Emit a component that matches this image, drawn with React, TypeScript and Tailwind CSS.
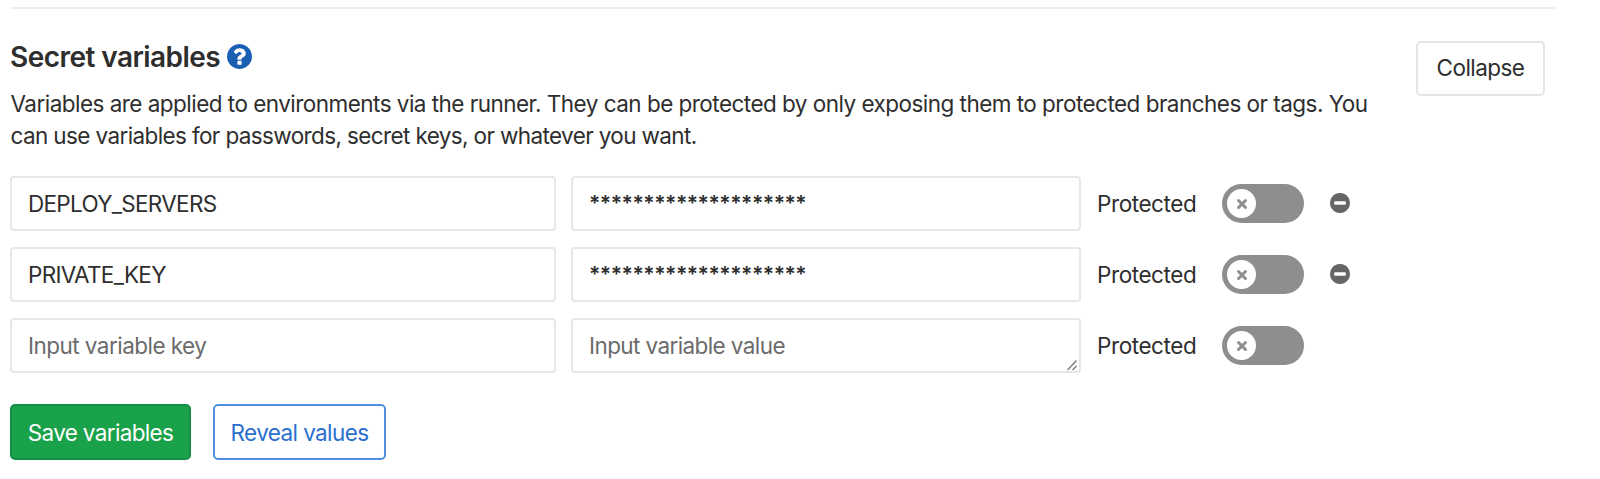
import React from "react";

const CIRCLE =
  "q0 209-103 385.5t-279.5 279.5-385.5 103-385.5-103-279.5-279.5-103-385.5 103-385.5 279.5-279.5 385.5-103 385.5 103 279.5 279.5 103 385.5z";

function HelpIcon() {
  return (
    <svg viewBox="128 128 1536 1536" className="mb-px ml-[7px] size-[25px] fill-[#1b5fb3]" aria-hidden="true">
      <path
        d={
          "M1024 1376v-192q0-14-9-23t-23-9h-192q-14 0-23 9t-9 23v192q0 14 9 23t23 9h192q14 0 23-9t9-23zm256-672q0-88-55.5-163t-138.5-116-170-41q-243 0-371 213-15 24 8 42l132 100q7 6 19 6 16 0 25-12 53-68 86-92 34-24 86-24 48 0 85.5 26t37.5 59q0 38-20 61t-68 45q-63 28-115.5 86.5t-52.5 125.5v36q0 14 9 23t23 9h192q14 0 23-9t9-23q0-19 21.5-49.5t54.5-49.5q32-18 49-28.5t46-35 44.5-48 28-60.5 12.5-81zm384 192" +
          CIRCLE
        }
      />
    </svg>
  );
}

function RemoveIcon() {
  return (
    <svg viewBox="128 128 1536 1536" className="size-5 fill-[#666666]" aria-hidden="true">
      <path
        d={
          "M1344 960v-128q0-26-19-45t-45-19h-768q-26 0-45 19t-19 45v128q0 26 19 45t45 19h768q26 0 45-19t19-45zm320-64" +
          CIRCLE
        }
      />
    </svg>
  );
}

function Toggle() {
  return (
    <button type="button" role="switch" aria-checked="false" className="ml-[26px] flex h-[39px] w-[82px] items-center rounded-full bg-[#8e8e8e] pl-[5px]">
      <span className="flex size-[29px] items-center justify-center rounded-full bg-white">
        <svg viewBox="0 0 12 12" className="size-3" fill="none" stroke="#8e8e8e" strokeWidth="3" strokeLinecap="round">
          <path d="M2.5 2.5 9.5 9.5M9.5 2.5 2.5 9.5" />
        </svg>
      </span>
    </button>
  );
}

const field = "flex h-[55px] items-center rounded-[4px] border-2 border-[#e7e7e7] pl-4 pt-px";

const rows = [
  { name: "DEPLOY_SERVERS", tracking: "tracking-[-0.7px]" },
  { name: "PRIVATE_KEY", tracking: "tracking-[-0.7px]" },
  { name: "", tracking: "" },
];

export default function App() {
  return (
    <main className="h-[479px] w-[1600px] overflow-hidden bg-white pl-[10px] pt-[7px] font-['Inter','Liberation_Sans',sans-serif] text-[22.5px] leading-[32px] text-[#2e2e2e]">
      <hr className="w-[1545px] border-t-2 border-[#eeeeee]" />
      <header className="flex h-[167px] justify-between pt-[32px]">
        <div>
          <h4 className="flex h-[32px] items-center whitespace-nowrap text-[28px] font-semibold tracking-[-0.55px]">
            <span>Secret variables</span>
            <HelpIcon />
          </h4>
          <p className="mt-[15px] whitespace-nowrap pl-[0.5px]">
            <span className="block tracking-[-0.53px]">
              Variables are applied to environments via the runner. They can be protected by only exposing them to protected branches or tags. You
            </span>
            <span className="block tracking-[-0.62px]">
              can use variables for passwords, secret keys, or whatever you want.
            </span>
          </p>
        </div>
        <button type="button" className="mr-[55px] h-[55px] w-[129px] rounded-[5px] border-2 border-[#e5e5e5] pb-px tracking-[-0.55px]">
          Collapse
        </button>
      </header>
      <ul className="flex flex-col gap-4">
        {rows.map((row, i) => (
          <li key={i} className="flex h-[55px] items-center">
            <div className={`${field} w-[546px]`}>
              {row.name ? (
                <span className={row.tracking}>{row.name}</span>
              ) : (
                <span className="tracking-[-0.54px] text-[#6b6b6b]">Input variable key</span>
              )}
            </div>
            <div className={`${field} relative ml-[15px] w-[510px]`}>
              {row.name ? (
                <span className="text-[21px] font-semibold tracking-[-0.47px]">********************</span>
              ) : (
                <>
                  <span className="tracking-[-0.6px] text-[#6b6b6b]">Input variable value</span>
                  <svg viewBox="0 0 12 12" className="absolute bottom-0 right-px size-3" fill="none" stroke="#777777" strokeWidth="1.3">
                    <path d="M1.5 11 10.5 1.5M6.5 11 10.5 7" />
                  </svg>
                </>
              )}
            </div>
            <span className="ml-[16px] w-[99px] whitespace-nowrap pt-px tracking-[-0.42px]">Protected</span>
            <Toggle />
            {row.name && (
              <button type="button" className="mb-px ml-[26px]" aria-label="Remove">
                <RemoveIcon />
              </button>
            )}
          </li>
        ))}
      </ul>
      <div className="mt-[31px] flex gap-[22px]">
        <button type="button" className="h-[56px] w-[181px] whitespace-nowrap rounded-[5px] border-2 border-[#168f48] bg-[#1aa24b] pt-px tracking-[-0.65px] text-white">
          Save variables
        </button>
        <button type="button" className="h-[56px] w-[173px] whitespace-nowrap rounded-[5px] border-2 border-[#5090dd] pt-px tracking-[-0.6px] text-[#2a6fce]">
          Reveal values
        </button>
      </div>
    </main>
  );
}
